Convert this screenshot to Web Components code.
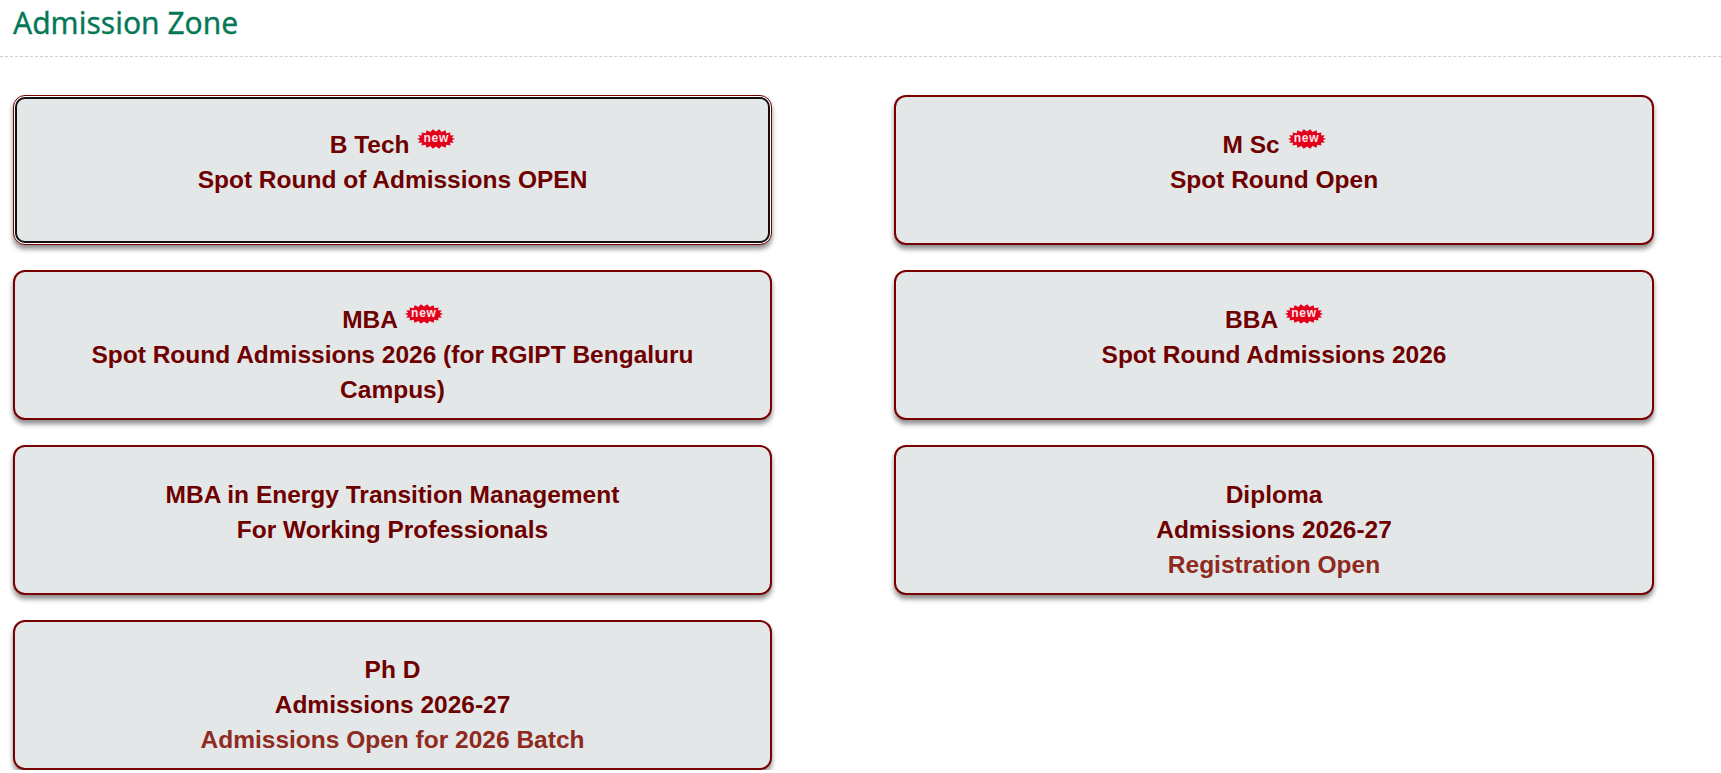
<!DOCTYPE html>
<html lang="en">
<head>
<meta charset="utf-8">
<title>Admission Zone</title>
<style>
  html, body { margin: 0; padding: 0; background: #fff; }
</style>
</head>
<body>
<admission-page>
  <zone-heading>Admission Zone</zone-heading>
  <admission-card focused>
    <span>B Tech <new-badge></new-badge></span>
    <span>Spot Round of Admissions OPEN</span>
  </admission-card>
  <admission-card>
    <span>M Sc <new-badge></new-badge></span>
    <span>Spot Round Open</span>
  </admission-card>
  <admission-card>
    <span>MBA <new-badge></new-badge></span>
    <span>Spot Round Admissions 2026 (for RGIPT Bengaluru Campus)</span>
  </admission-card>
  <admission-card>
    <span>BBA <new-badge></new-badge></span>
    <span>Spot Round Admissions 2026</span>
  </admission-card>
  <admission-card>
    <span>MBA in Energy Transition Management</span>
    <span>For Working Professionals</span>
  </admission-card>
  <admission-card>
    <span>Diploma</span>
    <span>Admissions 2026-27</span>
    <span slot="note">Registration Open</span>
  </admission-card>
  <admission-card>
    <span>Ph D</span>
    <span>Admissions 2026-27</span>
    <span slot="note">Admissions Open for 2026 Batch</span>
  </admission-card>
</admission-page>

<script>
class AdmissionPage extends HTMLElement {
  constructor() {
    super();
    this.attachShadow({mode: 'open'});
    this.shadowRoot.innerHTML = `
      <style>
        :host { display: block; }
        .grid {
          display: grid;
          grid-template-columns: 759px 760px;
          column-gap: 122px;
          row-gap: 25px;
          padding: 38px 0 0 13px;
        }
      </style>
      <slot name="heading"></slot>
      <div class="grid"><slot></slot></div>
    `;
  }
  connectedCallback() {
    const heading = this.querySelector('zone-heading');
    if (heading) heading.slot = 'heading';
  }
}

class ZoneHeading extends HTMLElement {
  constructor() {
    super();
    this.attachShadow({mode: 'open'});
    this.shadowRoot.innerHTML = `
      <style>
        :host {
          display: block;
          height: 57px;
          box-sizing: border-box;
          padding-left: 13px;
          border-bottom: 1px dashed #cfcfcf;
          font: 400 30px/46px "Noto Sans", sans-serif;
          -webkit-text-stroke: .3px #047857;
          color: #047857;
        }
      </style>
      <slot></slot>
    `;
  }
}

class AdmissionCard extends HTMLElement {
  constructor() {
    super();
    this.attachShadow({mode: 'open'});
    this.shadowRoot.innerHTML = `
      <style>
        :host {
          display: block;
          height: 150px;
          box-sizing: border-box;
          padding: 30px 30px 0;
          border: 2px solid #780000;
          border-radius: 12px;
          background: #e4e7e8;
          box-shadow: 0 4px 5px rgba(0, 0, 0, .45);
          font: 700 24.5px/35px "Liberation Sans", Arial, sans-serif;
          color: #6e0000;
          text-align: center;
        }
        :host([focused]) {
          outline: 2px solid #111;
          outline-offset: -4px;
          border-width: 1px;
          padding: 31px 31px 0;
          box-shadow: inset 0 0 0 1px #fff, 0 4px 5px rgba(0, 0, 0, .45);
        }
        ::slotted(span) { display: block; }
        .note { color: #8f2a1e; }
      </style>
      <slot></slot>
      <div class="note"><slot name="note"></slot></div>
    `;
  }
}

class NewBadge extends HTMLElement {
  constructor() {
    super();
    this.attachShadow({mode: 'open'});
    // starburst is generated so the spikes stay even around the oval
    const pts = [];
    const spikes = 18;
    for (let i = 0; i < spikes * 2; i++) {
      const a = Math.PI * i / spikes;
      const rx = i % 2 ? 16 : 19;
      const ry = i % 2 ? 7.5 : 10;
      pts.push((19 + rx * Math.cos(a)).toFixed(1) + ',' + (10 + ry * Math.sin(a)).toFixed(1));
    }
    this.shadowRoot.innerHTML = `
      <style>
        :host {
          display: inline-block;
          position: relative;
          width: 38px;
          height: 20px;
          margin-left: 1px;
          vertical-align: 4px;
        }
        svg { display: block; }
        span {
          position: absolute;
          inset: 0;
          text-align: center;
          font: 700 12px/18px "Liberation Sans", Arial, sans-serif;
          letter-spacing: .7px;
          color: #fbe4e6;
        }
      </style>
      <svg width="38" height="20" viewBox="0 0 38 20"><polygon points="${pts.join(' ')}" fill="#e2001a"/></svg>
      <span>new</span>
    `;
  }
}

customElements.define('admission-page', AdmissionPage);
customElements.define('zone-heading', ZoneHeading);
customElements.define('admission-card', AdmissionCard);
customElements.define('new-badge', NewBadge);
</script>
</body>
</html>
